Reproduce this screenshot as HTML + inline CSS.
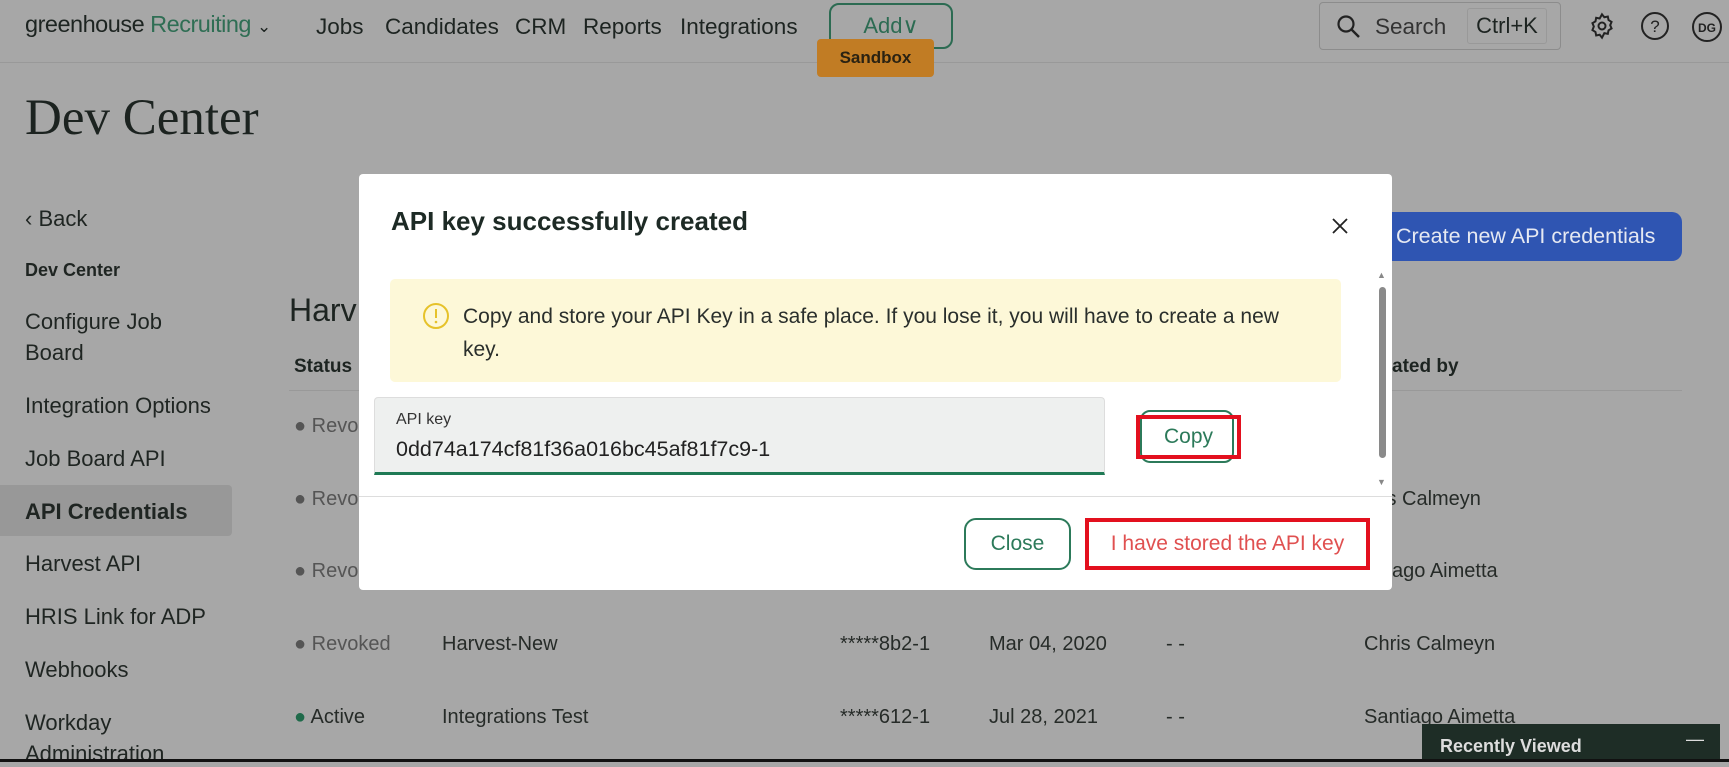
<!DOCTYPE html>
<html><head><meta charset="utf-8"><style>
*{margin:0;padding:0;box-sizing:border-box}
body{width:1729px;height:762px;overflow:hidden;background:#a7a7a7;font-family:"Liberation Sans",sans-serif;color:#1d2421;position:relative}
.a{position:absolute;white-space:nowrap}
.nav{font-size:22.5px;top:14px}
.sb{font-size:22px;left:25px;color:#1f2522}
.row{font-size:20px;color:#262b28}
.gray{color:#555}
</style></head><body>
<div class="a" style="left:0;top:62px;width:1729px;height:1px;background:#999"></div>
<div class="a nav" style="left:25px;top:11px;font-size:23.5px;letter-spacing:-0.5px">greenhouse <span style="color:#2f6e54">Recruiting</span> <span style="font-size:17px">&#8964;</span></div>
<div class="a nav" style="left:316px">Jobs</div>
<div class="a nav" style="left:385px">Candidates</div>
<div class="a nav" style="left:515px">CRM</div>
<div class="a nav" style="left:583px">Reports</div>
<div class="a nav" style="left:680px">Integrations</div>
<div class="a" style="left:829px;top:3px;width:124px;height:46px;border:2px solid #2c6b52;border-radius:10px;color:#2c6b52;font-size:22px;text-align:center;line-height:42px">Add&#8744;</div>
<div class="a" style="left:817px;top:39px;width:117px;height:38px;background:#c17c24;border-radius:4px;font-size:17px;font-weight:bold;text-align:center;line-height:38px;color:#2a2212">Sandbox</div>
<div class="a" style="left:1319px;top:2px;width:242px;height:48px;border:1px solid #8c8c8c;border-radius:4px"></div>
<svg class="a" style="left:1336px;top:14px" width="26" height="26" viewBox="0 0 26 26"><circle cx="10" cy="10" r="7.5" fill="none" stroke="#222" stroke-width="2.2"/><path d="M15.5 15.5L23 23" stroke="#222" stroke-width="2.4"/></svg>
<div class="a nav" style="left:1375px;top:14px;color:#333">Search</div>
<div class="a" style="left:1467px;top:8px;width:80px;height:36px;border:1px solid #999;border-radius:3px;font-size:22px;line-height:34px;text-align:center">Ctrl+K</div>
<svg class="a" style="left:1588px;top:12px" width="28" height="28" viewBox="0 0 24 24"><path d="M12 2l2 2.5 3-.6.6 3 2.6 1.6-1.2 2.8 1.2 2.8-2.6 1.6-.6 3-3-.6L12 22l-2-2.5-3 .6-.6-3-2.6-1.6L5 12.4 3.8 9.6l2.6-1.6.6-3 3 .6z" fill="none" stroke="#222" stroke-width="1.7"/><circle cx="12" cy="12" r="3" fill="none" stroke="#222" stroke-width="1.7"/></svg>
<svg class="a" style="left:1640px;top:11px" width="30" height="30" viewBox="0 0 30 30"><circle cx="15" cy="15" r="13" fill="none" stroke="#222" stroke-width="2"/><text x="15" y="21" font-size="17" text-anchor="middle" fill="#222" font-family="Liberation Sans">?</text></svg>
<svg class="a" style="left:1691px;top:11px" width="32" height="32" viewBox="0 0 32 32"><circle cx="16" cy="16" r="14" fill="none" stroke="#222" stroke-width="2"/><text x="16" y="21" font-size="12" font-weight="bold" text-anchor="middle" fill="#222" font-family="Liberation Sans">DG</text></svg>

<div class="a" style="left:25px;top:89px;font-family:'Liberation Serif',serif;font-size:51px;color:#1c2320">Dev Center</div>

<div class="a sb" style="top:206px">&#8249; Back</div>
<div class="a sb" style="top:260px;font-size:18px;font-weight:bold">Dev Center</div>
<div class="a sb" style="top:309px">Configure Job</div>
<div class="a sb" style="top:340px">Board</div>
<div class="a sb" style="top:393px">Integration Options</div>
<div class="a sb" style="top:446px">Job Board API</div>
<div class="a" style="left:0;top:485px;width:232px;height:51px;background:#989898;border-radius:0 4px 4px 0"></div>
<div class="a sb" style="top:499px;font-weight:bold">API Credentials</div>
<div class="a sb" style="top:551px">Harvest API</div>
<div class="a sb" style="top:604px">HRIS Link for ADP</div>
<div class="a sb" style="top:657px">Webhooks</div>
<div class="a sb" style="top:710px">Workday</div>
<div class="a sb" style="top:741px">Administration</div>

<div class="a" style="left:1378px;top:212px;width:304px;height:49px;background:#2f55b2;border-radius:10px;color:#e6e9f2;font-size:21.5px;line-height:49px;padding-left:18px">Create new API credentials</div>
<div class="a" style="left:289px;top:292px;font-size:32px">Harv</div>
<div class="a" style="left:294px;top:356px;font-size:19px;font-weight:bold">Status</div>
<div class="a" style="left:1392px;top:356px;font-size:19px;font-weight:bold">ated by</div>
<div class="a" style="left:289px;top:390px;width:1393px;height:1px;background:#999"></div>

<div class="a row gray" style="left:294px;top:415px">&#9679; Revo</div>
<div class="a row gray" style="left:294px;top:488px">&#9679; Revo</div>
<div class="a row" style="left:1382px;top:488px">is Calmeyn</div>
<div class="a row gray" style="left:294px;top:560px">&#9679; Revo</div>
<div class="a row" style="left:1382px;top:560px">tiago Aimetta</div>
<div class="a row gray" style="left:294px;top:633px">&#9679; Revoked</div>
<div class="a row" style="left:442px;top:633px">Harvest-New</div>
<div class="a row" style="left:840px;top:633px">*****8b2-1</div>
<div class="a row" style="left:989px;top:633px">Mar 04, 2020</div>
<div class="a row" style="left:1166px;top:633px">- -</div>
<div class="a row" style="left:1364px;top:633px">Chris Calmeyn</div>
<div class="a row" style="left:294px;top:706px"><span style="color:#1f6a4a">&#9679;</span> Active</div>
<div class="a row" style="left:442px;top:706px">Integrations Test</div>
<div class="a row" style="left:840px;top:706px">*****612-1</div>
<div class="a row" style="left:989px;top:706px">Jul 28, 2021</div>
<div class="a row" style="left:1166px;top:706px">- -</div>
<div class="a row" style="left:1364px;top:706px">Santiago Aimetta</div>
<div class="a" style="left:1422px;top:724px;width:298px;height:38px;background:#1e2d26;color:#ddd;font-size:18px;font-weight:bold;padding:12px 0 0 18px">Recently Viewed<span style="position:absolute;right:16px;top:5px;font-weight:normal">&#8212;</span></div>
<div class="a" style="left:0;top:759px;width:1729px;height:3px;background:#111"></div>

<!-- modal -->
<div class="a" style="left:359px;top:174px;width:1033px;height:416px;background:#fff;border-radius:4px"></div>
<div class="a" style="left:391px;top:206px;font-size:26px;font-weight:bold;color:#1d2a25">API key successfully created</div>
<svg class="a" style="left:1332px;top:218px" width="16" height="16" viewBox="0 0 16 16"><path d="M1 1L15 15M15 1L1 15" stroke="#222" stroke-width="1.8"/></svg>
<div class="a" style="left:390px;top:279px;width:951px;height:103px;background:#fdf8d8;border-radius:5px"></div>
<svg class="a" style="left:422px;top:302px" width="28" height="28" viewBox="0 0 28 28"><circle cx="14" cy="14" r="12" fill="none" stroke="#e6c22a" stroke-width="2"/><path d="M14 7v9" stroke="#e6c22a" stroke-width="2"/><circle cx="14" cy="20" r="1.3" fill="#e6c22a"/></svg>
<div class="a" style="left:463px;top:300px;font-size:21px;line-height:33px;color:#2a2f2c;white-space:normal;width:850px">Copy and store your API Key in a safe place. If you lose it, you will have to create a new key.</div>
<div class="a" style="left:374px;top:397px;width:731px;height:78px;background:#eef0ef;border-radius:4px 4px 0 0;border:1px solid #ddd;border-bottom:3px solid #1f7a55"></div>
<div class="a" style="left:396px;top:411px;font-size:16px;color:#333">API key</div>
<div class="a" style="left:396px;top:437px;font-size:21.5px;color:#222">0dd74a174cf81f36a016bc45af81f7c9-1</div>
<div class="a" style="left:1140px;top:410px;width:94px;height:53px;border:2px solid #2c7a5a;border-radius:10px"></div>
<div class="a" style="left:1136px;top:415px;width:105px;height:44px;border:4px solid #e3101e;color:#2c7a5a;font-size:21px;text-align:center;line-height:36px">Copy</div>
<div class="a" style="left:1379px;top:287px;width:7px;height:171px;background:#8a8a8a;border-radius:4px"></div>
<div class="a" style="left:1377px;top:270px;font-size:9px;color:#888">&#9650;</div>
<div class="a" style="left:1377px;top:477px;font-size:9px;color:#888">&#9660;</div>
<div class="a" style="left:359px;top:496px;width:1033px;height:1px;background:#ddd"></div>
<div class="a" style="left:964px;top:518px;width:107px;height:52px;border:2px solid #2c7a5a;border-radius:12px;color:#2c7a5a;font-size:21px;text-align:center;line-height:48px">Close</div>
<div class="a" style="left:1085px;top:518px;width:285px;height:52px;border:4px solid #e3101e;color:#e05050;font-size:21px;text-align:center;line-height:44px">I have stored the API key</div>
</body></html>
